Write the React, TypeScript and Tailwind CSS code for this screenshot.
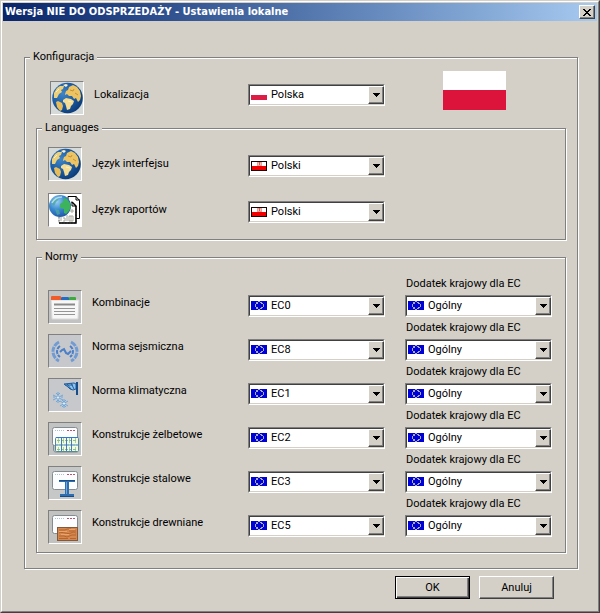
import { useId, type ReactNode } from "react";

type FlagKind = "polska" | "polski" | "eu";

const EU_STARS = [
  [7, 1], [9, 2], [10, 3], [10, 7], [7, 9], [9, 8], [5, 7], [5, 3], [5, 2], [5, 8],
];

function Flag({ kind }: { kind: FlagKind }) {
  return (
    <svg width="16" height="11" viewBox="0 0 16 11" shapeRendering="crispEdges" aria-hidden="true">
      {kind === "polska" && (
        <>
          <rect width="16" height="6" fill="#fff" />
          <rect y="6" width="16" height="5" fill="#dc1e46" />
        </>
      )}
      {kind === "polski" && (
        <>
          <rect y="1" width="16" height="10" fill="#1a0000" />
          <rect x="1" y="2" width="14" height="4" fill="#fff" />
          <rect x="1" y="6" width="14" height="4" fill="#f00000" />
          <rect x="6" y="2" width="5" height="4" fill="#e8a098" />
          <rect x="7" y="3" width="3" height="2" fill="#f0c8c0" />
          <rect x="8" y="2" width="1" height="3" fill="#c86058" />
        </>
      )}
      {kind === "eu" && (
        <>
          <rect y="1" width="16" height="9" fill="#0000d8" />
          {EU_STARS.map(([x, y]) => (
            <rect key={`${x}-${y}`} x={x} y={y} width="2" height="1" fill="#a8acb0" />
          ))}
          <rect x="4" y="4" width="1" height="3" fill="#a8acb0" />
          <rect x="12" y="4" width="1" height="3" fill="#a8acb0" />
        </>
      )}
    </svg>
  );
}

function Combo({ id, flag, value }: { id: string; flag: FlagKind; value: string }) {
  return (
    <div className="relative h-[22px] border border-t-[#808080] border-r-white border-b-white border-l-[#808080]">
      <div className="h-full border border-t-[#404040] border-r-[#d4d0c8] border-b-[#d4d0c8] border-l-[#404040] bg-white">
        <select id={id} className="block h-full w-full appearance-none bg-white pl-[21px] leading-4 text-black outline-none">
          <option>{value}</option>
        </select>
      </div>
      <span className="pointer-events-none absolute top-1 left-[2px]">
        <Flag kind={flag} />
      </span>
      <span className="pointer-events-none absolute inset-y-px right-0 flex w-4 items-center justify-center border border-t-white border-r-[#404040] border-b-[#404040] border-l-white bg-[#d4d0c8] shadow-[inset_-1px_-1px_0_#808080]">
        <svg width="7" height="4" viewBox="0 0 7 4" shapeRendering="crispEdges" aria-hidden="true">
          <path d="M0 0h7v1H0zM1 1h5v1H1zM2 2h3v1H2zM3 3h1v1H3z" fill="#000" />
        </svg>
      </span>
    </div>
  );
}

function IconBox({ tone, children }: { tone: string; children: ReactNode }) {
  return (
    <span className={`block size-[34px] border border-t-[#808080] border-r-white border-b-white border-l-[#808080] ${tone}`}>
      <svg width="32" height="32" viewBox="0 0 32 32" aria-hidden="true">
        {children}
      </svg>
    </span>
  );
}

function GlobeIcon() {
  const g = useId();
  return (
    <IconBox tone="bg-[#d6dad8]">
      <defs>
        <radialGradient id={g} cx="0.35" cy="0.35" r="0.7">
          <stop offset="0" stopColor="#3f86c8" />
          <stop offset="0.55" stopColor="#1c5ca4" />
          <stop offset="1" stopColor="#0c3c78" />
        </radialGradient>
      </defs>
      <circle cx="16.5" cy="16" r="15.3" fill={`url(#${g})`} />
      <path d="M3 11l3-5 3-2 4 0-1 3-2 1 1 2-3 2-2 4-3 0z" fill="#edd07c" />
      <path d="M5 20l2-1 4 2 1 3-1 4-2 1-3-4z" fill="#e8bc58" />
      <path d="M14 12l1-3 2-1 1-3 4-2 4 2 3 4 1 5-1 4-2 2-2-4-2 1-2-3-3 0-2-2-2 1z" fill="#edc463" />
      <path d="M12 18l3-2 5 1 3 2-1 3-2 2-1 3-3 1-1-4-1-3-2-1z" fill="#f4dc94" />
      <path d="M12 3l3-1 2 1-2 2z" fill="#fff1c9" />
      <path d="M19 8l3 1 1-2M24 11l3 2" stroke="#c78f35" fill="none" />
      <path d="M5 10l3-3M17 19l4 1" stroke="#fff1b9" fill="none" />
    </IconBox>
  );
}

function ReportIcon() {
  const g = useId();
  return (
    <IconBox tone="bg-white">
      <defs>
        <radialGradient id={g} cx="0.35" cy="0.3" r="0.75">
          <stop offset="0" stopColor="#9bd0f4" />
          <stop offset="0.5" stopColor="#3a8ad0" />
          <stop offset="1" stopColor="#1e55a8" />
        </radialGradient>
      </defs>
      <path d="M19 2.500h8l3.500 4v18H19z" fill="#fff" stroke="#000" />
      <path d="M27 2v4h4" fill="none" stroke="#000" />
      <path d="M10 8h13l4 4v17H10z" fill="#fff" stroke="#555" strokeDasharray="2 1" />
      <path d="M23 8l4 4v17H10" fill="none" stroke="#000" strokeWidth="1.5" />
      <path d="M23 8v4h4" fill="none" stroke="#000" />
      <path d="M12 23v4M14 24h2v3h-2M18 21v6M20 22h4v5h-4zM22 22v5M21 17h4M23 15v4" fill="none" stroke="#a8a89c" />
      <circle cx="11" cy="12" r="11" fill={`url(#${g})`} />
      <path d="M11 10l3-2 1-4 3 1 3 4 1 4-2 4-3 3-2-1 0-4-4-1z" fill="#3eb35e" />
      <path d="M3 6l5-3 2 2-3 3-2 4-2-2zM6 15l4 1 1 4-3 1z" fill="#4ea8a0" opacity="0.8" />
      <path d="M3 9c2-4 6-6 10-6" stroke="#d9f2ff" fill="none" opacity="0.7" strokeWidth="1.5" />
    </IconBox>
  );
}

function CombinationsIcon() {
  return (
    <IconBox tone="bg-[#c2c2c2]">
      <path d="M2 9h28l-1 19H3z" fill="#f7f7f7" stroke="#d7d7d7" />
      <path d="M2 9V6q0-1 1-1h8q1 0 1 1v3z" fill="#f15a29" />
      <path d="M12 9V7q0-1 1-1h6q1 0 1 1v2z" fill="#246bc4" />
      <path d="M20 9V7q0-1 1-1h5q1 0 1 1v2z" fill="#3daa3d" />
      <path d="M5 13.500h21" stroke="#8a8a8a" strokeWidth="2" />
      <path d="M5 17.500h21M5 20.500h21M5 23.500h21" stroke="#959595" />
    </IconBox>
  );
}

function SeismicIcon() {
  return (
    <IconBox tone="bg-[#c6c8cb]">
      <g fill="none" stroke="#4b7fc8">
        <path d="M10 7C2 11 2 22 10 26" strokeWidth="3" strokeDasharray="6 1 5 1" stroke="#719bd4" />
        <path d="M22 7c8 4 8 15 0 19" strokeWidth="3" strokeDasharray="6 1 5 1" stroke="#719bd4" />
        <path d="M11 11c-4 3-4 8 0 11" strokeWidth="2" strokeDasharray="4 1" />
        <path d="M21 11c4 3 4 8 0 11" strokeWidth="2" strokeDasharray="4 1" />
        <path d="M11 17l2-2 2-1 2 4 2 1 3-3" strokeWidth="2" />
      </g>
    </IconBox>
  );
}

function ClimateIcon() {
  return (
    <IconBox tone="bg-[#c6c8cb]">
      <path d="M15 5l10-1 2 1v5l-3 1-3-1-2-2z" fill="#8cc4ee" stroke="#205c9c" />
      <path d="M18 5l4 5M22 4l3 6M16 6h8" stroke="#205c9c" />
      <path d="M28 3v13" stroke="#174c8a" strokeWidth="2" />
      <g stroke="#6ea8dc" fill="none">
        <path d="M9 13v11M4 16l10 5M14 16L4 21" />
        <path d="M7 14l2 2 2-2M7 23l2-2 2 2M4 18h2M12 18h2" />
        <path d="M15 20v9M11 22l8 5M19 22l-8 5" />
        <path d="M13 21l2 2 2-2M13 28l2-2 2 2" />
      </g>
      <circle cx="9" cy="18.5" r="1" fill="#e4f4ff" />
      <circle cx="15" cy="24.5" r="1" fill="#e4f4ff" />
    </IconBox>
  );
}

function WindowShape() {
  return (
    <>
      <rect x="3.5" y="4.5" width="25" height="18" rx="2" fill="#fbfdff" stroke="#858b90" />
      <path d="M6 7.500h9" stroke="#b4c0c8" strokeDasharray="1 1" />
      <path d="M18 7.500h8" stroke="#b85470" strokeDasharray="2 1" />
    </>
  );
}

function ConcreteIcon() {
  return (
    <IconBox tone="bg-[#c2c4c4]">
      <WindowShape />
      <path d="M4.500 22v5c0 1 1 2 2 2h22" fill="none" stroke="#858b90" />
      <rect x="6.5" y="14.5" width="23" height="14" rx="1" fill="#f3fae2" stroke="#54889a" />
      <path d="M8 17.500h20M8 26.500h20" stroke="#8cbc94" strokeDasharray="3 1" />
      <path d="M7 22h22M7 14.500h22" stroke="#3477d8" />
      <path d="M12.500 15v13M17.500 15v13M22.500 15v13" stroke="#4679b4" />
      <path d="M14.500 15v13M20.500 15v13M9.500 15v13M26.500 15v13" stroke="#a4d4a4" strokeDasharray="2 1" />
    </IconBox>
  );
}

function SteelIcon() {
  return (
    <IconBox tone="bg-[#c6c8c8]">
      <WindowShape />
      <path d="M10 13h16v2h-6v12h5v3H11v-3h5V15h-6z" fill="#2d6eb3" />
      <path d="M17.500 15v12" stroke="#70a8dc" />
      <path d="M10 13.500h16M11 29.500h14" stroke="#184c82" />
    </IconBox>
  );
}

function TimberIcon() {
  return (
    <IconBox tone="bg-[#c2c2c0]">
      <WindowShape />
      <rect x="8.5" y="16.5" width="20" height="13" fill="#d48850" stroke="#85583a" />
      <path d="M10 19h6l2-1h4M20 20h7M10 22c4-2 8 2 12 0s3 0 5 0M10 25h5l3 1 5-2h4M10 27.500h9M21 27.500h6" stroke="#b5652f" fill="none" />
      <path d="M10 20.500h8M12 23.500h8M20 18.500h6" stroke="#e8a46c" fill="none" />
    </IconBox>
  );
}

const GRID = "grid grid-cols-[44px_minmax(0,1fr)_157px_147px] items-end";
const GROUP = "border border-[#808080] shadow-[1px_1px_0_#fff,inset_1px_1px_0_#fff]";
const LEGEND = "-ml-[6px] bg-[#d4d0c8] px-[3px] leading-4";

interface Setting {
  id: string;
  label: string;
  value: string;
  icon: ReactNode;
}

const LANGUAGES: Setting[] = [
  { id: "interfejs", label: "Język interfejsu", value: "Polski", icon: <GlobeIcon /> },
  { id: "raporty", label: "Język raportów", value: "Polski", icon: <ReportIcon /> },
];

const STANDARDS: Setting[] = [
  { id: "kombinacje", label: "Kombinacje", value: "EC0", icon: <CombinationsIcon /> },
  { id: "sejsmiczna", label: "Norma sejsmiczna", value: "EC8", icon: <SeismicIcon /> },
  { id: "klimatyczna", label: "Norma klimatyczna", value: "EC1", icon: <ClimateIcon /> },
  { id: "zelbetowe", label: "Konstrukcje żelbetowe", value: "EC2", icon: <ConcreteIcon /> },
  { id: "stalowe", label: "Konstrukcje stalowe", value: "EC3", icon: <SteelIcon /> },
  { id: "drewniane", label: "Konstrukcje drewniane", value: "EC5", icon: <TimberIcon /> },
];

export default function App() {
  return (
    <div className="border border-t-[#d4d0c8] border-r-[#404040] border-b-[#404040] border-l-[#d4d0c8] bg-[#d4d0c8] font-['Roboto','Liberation_Sans',sans-serif] text-[11px] text-black">
      <div className="border border-t-white border-r-[#808080] border-b-[#808080] border-l-white p-px pb-3">
        <header className="flex h-[18px] items-center justify-between bg-linear-to-r from-[#0a246a] to-[#a6caf0] px-[2px]">
          <h1 className="font-['DejaVu_Sans_Condensed','DejaVu_Sans',sans-serif] leading-4 font-bold whitespace-nowrap text-white">
            Wersja NIE DO ODSPRZEDAŻY - Ustawienia lokalne
          </h1>
          <button
            type="button"
            aria-label="Zamknij"
            className="flex h-[14px] w-4 items-center justify-center border border-t-white border-r-[#404040] border-b-[#404040] border-l-white bg-[#d4d0c8] shadow-[inset_-1px_-1px_0_#808080]"
          >
            <svg width="8" height="7" viewBox="0 0 8 7" shapeRendering="crispEdges" aria-hidden="true">
              <path
                d="M0 0h2v1H0zM6 0h2v1H6zM1 1h2v1H1zM5 1h2v1H5zM2 2h4v1H2zM3 3h2v1H3zM2 4h4v1H2zM1 5h2v1H1zM5 5h2v1H5zM0 6h2v1H0zM6 6h2v1H6z"
                fill="#000"
              />
            </svg>
          </button>
        </header>

        <form className="pt-7 pr-[19px] pl-[21px]" onSubmit={(e) => e.preventDefault()}>
          <fieldset className={`${GROUP} px-[11px] pb-[15px]`}>
            <legend className={LEGEND}>Konfiguracja</legend>

            <div className={`${GRID} px-[14px] pt-[6px] pb-[5px]`}>
              <GlobeIcon />
              <label htmlFor="lokalizacja" className="pb-3 leading-4">Lokalizacja</label>
              <div className="pr-5 pb-[9px]">
                <Combo id="lokalizacja" flag="polska" value="Polska" />
              </div>
              <div className="flex justify-center pr-2 pb-[5px]">
                <svg width="63" height="39" viewBox="0 0 63 39" shapeRendering="crispEdges" role="img" aria-label="Flaga Polski">
                  <rect width="63" height="19" fill="#fff" />
                  <rect y="19" width="63" height="20" fill="#dc143c" />
                </svg>
              </div>
            </div>

            <fieldset className={`${GROUP} pr-[13px] pb-3 pl-[11px]`}>
              <legend className={LEGEND}>Languages</legend>
              <div className="flex flex-col gap-3 pt-[11px]">
                {LANGUAGES.map((s) => (
                  <div key={s.id} className={GRID}>
                    {s.icon}
                    <label htmlFor={s.id} className="pb-[9px] leading-4">{s.label}</label>
                    <div className="pr-5 pb-1">
                      <Combo id={s.id} flag="polski" value={s.value} />
                    </div>
                  </div>
                ))}
              </div>
            </fieldset>

            <fieldset className={`${GROUP} mt-[9px] pr-[13px] pb-2 pl-[11px]`}>
              <legend className={LEGEND}>Normy</legend>
              <div className="pt-[15px]">
                {STANDARDS.map((s) => (
                  <div key={s.id} className={`${GRID} h-11`}>
                    {s.icon}
                    <label htmlFor={s.id} className="pb-[13px] leading-4">{s.label}</label>
                    <div className="pr-5 pb-[7px]">
                      <Combo id={s.id} flag="eu" value={s.value} />
                    </div>
                    <div className="pb-[7px]">
                      <label htmlFor={`${s.id}-ec`} className="mb-[7px] block pl-px leading-2">
                        Dodatek krajowy dla EC
                      </label>
                      <Combo id={`${s.id}-ec`} flag="eu" value="Ogólny" />
                    </div>
                  </div>
                ))}
              </div>
            </fieldset>
          </fieldset>

          <div className="mt-[7px] flex justify-end gap-[9px] pr-6">
            <button type="submit" className="h-[23px] w-[75px] border border-black bg-[#d4d0c8] leading-4 shadow-[inset_1px_1px_0_#fff,inset_-1px_-1px_0_#404040,inset_-2px_-2px_0_#808080]">
              OK
            </button>
            <button type="button" className="h-[23px] w-[75px] border border-t-white border-r-[#404040] border-b-[#404040] border-l-white bg-[#d4d0c8] leading-4 shadow-[inset_-1px_-1px_0_#808080]">
              Anuluj
            </button>
          </div>
        </form>
      </div>
    </div>
  );
}
